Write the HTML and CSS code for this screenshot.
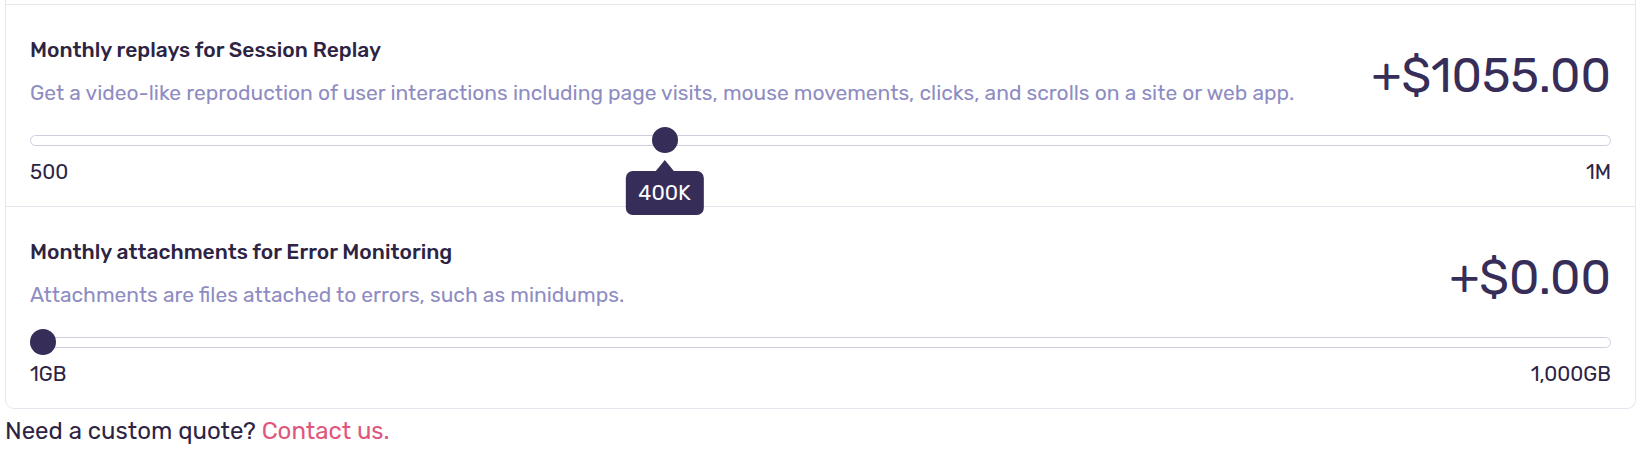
FILE: index.html
```html
<!DOCTYPE html>
<html lang="en">
<head>
<meta charset="utf-8">
<title>Pricing add-ons</title>
<link rel="stylesheet" href="styles.css">
</head>
<body>
<div class="page">
  <div class="card">
    <section class="addon">
      <div class="head">
        <div class="info">
          <h3 class="title">Monthly replays for Session Replay</h3>
          <p class="desc">Get a video-like reproduction of user interactions including page visits, mouse movements, clicks, and scrolls on a site or web app.</p>
        </div>
        <div class="price">+$1055.00</div>
      </div>
      <div class="slider" style="--p:0.3997">
        <div class="track"></div>
        <div class="thumb">
          <div class="tip">400K</div>
        </div>
      </div>
      <div class="scale"><span>500</span><span>1M</span></div>
    </section>
    <section class="addon">
      <div class="head">
        <div class="info">
          <h3 class="title">Monthly attachments for Error Monitoring</h3>
          <p class="desc">Attachments are files attached to errors, such as minidumps.</p>
        </div>
        <div class="price">+$0.00</div>
      </div>
      <div class="slider" style="--p:0">
        <div class="track"></div>
        <div class="thumb"></div>
      </div>
      <div class="scale"><span>1GB</span><span>1,000GB</span></div>
    </section>
  </div>
  <p class="footer">Need a custom quote? <a class="link" href="#">Contact us.</a></p>
</div>
</body>
</html>
```

FILE: styles.css
```css
* { box-sizing: border-box; }

html, body {
  margin: 0;
  padding: 0;
  background: #ffffff;
}

body {
  font-family: "Rubik", "Inter", "Noto Sans", sans-serif;
  color: #2b1d38;
}

.page {
  margin-left: 5px;
  width: 1631px;
}

.card {
  border: 1px solid #e7e5ed;
  border-top: 0;
  border-radius: 0 0 9px 9px;
  padding-top: 4px;
  background: #fff;
}

.addon {
  border-top: 1px solid #e7e5ed;
  padding: 30px 24px 19px;
}

.head {
  display: flex;
  align-items: center;
  justify-content: space-between;
  gap: 24px;
}

.info {
  min-width: 0;
}

.title {
  margin: 0;
  font-size: 21px;
  line-height: 30px;
  font-weight: 500;
  color: #2d2444;
}

.desc {
  margin: 13px 0 0;
  font-size: 21px;
  line-height: 30px;
  font-weight: 400;
  color: #8e8cc2;
}

.price {
  font-size: 48px;
  line-height: 48px;
  font-weight: 400;
  color: #362d59;
  white-space: nowrap;
  margin-top: 8px;
}

.slider {
  position: relative;
  height: 26px;
  margin-top: 19px;
  display: flex;
  align-items: center;
}

.track {
  width: 100%;
  height: 11px;
  border: 1px solid #d1cde0;
  border-radius: 6px;
  background: #fff;
}

.thumb {
  position: absolute;
  top: 0;
  left: calc((100% - 26px) * var(--p));
  width: 26px;
  height: 26px;
  border-radius: 50%;
  background: #362d59;
}

.tip {
  position: absolute;
  top: 44px;
  left: 50%;
  transform: translateX(-50%);
  background: #362d59;
  color: #fff;
  font-size: 21px;
  line-height: 30px;
  padding: 7px 13px;
  border-radius: 7px;
  white-space: nowrap;
  z-index: 2;
}

.tip::before {
  content: "";
  position: absolute;
  left: 50%;
  top: -11px;
  margin-left: -9px;
  border-left: 9px solid transparent;
  border-right: 9px solid transparent;
  border-bottom: 11px solid #362d59;
}

.scale {
  display: flex;
  justify-content: space-between;
  margin-top: 4px;
  font-size: 20.5px;
  line-height: 30px;
  color: #2d2444;
}

.footer {
  margin: 4px 0 0;
  font-size: 24px;
  line-height: 36px;
  color: #2d2444;
}

.link {
  color: #e1567c;
  text-decoration: none;
}
```
